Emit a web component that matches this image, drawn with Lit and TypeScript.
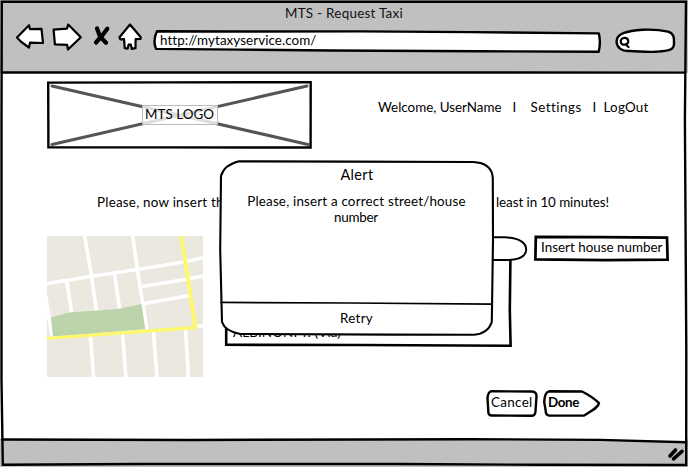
import { LitElement, html, css, svg } from "lit";
import { customElement, property } from "lit/decorators.js";

/* A single line of text, tracked so that it fills the given width. */
@customElement("sketch-label")
class SketchLabel extends LitElement {
  @property({ type: Number }) fit = 0;
  @property() text = "";

  static styles = css`
    :host { display: block; white-space: pre; line-height: 16px; }
    span { display: inline-block; }
  `;

  firstUpdated() {
    const span = this.renderRoot.querySelector("span") as HTMLElement;
    const natural = span.getBoundingClientRect().width;
    span.style.letterSpacing = (this.fit - natural) / this.text.length + "px";
    this.style.width = this.fit + "px";
  }

  render() {
    return html`<span>${this.text}</span>`;
  }
}

const label = (text: string, fit: number, cls = "") =>
  html`<sketch-label class=${cls} .text=${text} .fit=${fit}></sketch-label>`;

const art = (x: number, y: number, w: number, h: number, body: unknown) =>
  html`<svg class="art" width=${w} height=${h} viewBox="${x} ${y} ${w} ${h}">${body}</svg>`;

@customElement("app-root")
class AppRoot extends LitElement {
  static styles = css`
    :host {
      display: block; width: 688px; height: 467px; overflow: hidden;
      font: 13.4px/16px Lato, "Noto Sans", sans-serif; color: #000; background: #fff;
    }
    * { box-sizing: border-box; }
    svg { display: block; fill: none; stroke: #000; stroke-width: 2.4; stroke-linejoin: round; stroke-linecap: round; }
    .window { position: relative; display: grid; grid-template-rows: 73px 366px 28px; height: 467px; }
    .frame { position: absolute; inset: 0; pointer-events: none; }
    .box { position: relative; }
    .box > .art { position: absolute; left: 0; top: 0; }
    .box > sketch-label { position: relative; }
    header { background: #c0c0c0; padding: 5px 13px 0 15px; }
    .title { margin-left: 270px; color: #111; }
    .toolbar { display: flex; align-items: flex-start; margin-top: 1px; }
    .nav-icons { display: flex; }
    .address { width: 450px; height: 30px; margin-left: 8px; padding: 10px 0 0 8px; }
    .search { margin-left: 11px; }
    main { padding-left: 46px; }
    .top { display: flex; height: 121px; padding-top: 7px; }
    .logo { width: 266px; height: 68px; padding: 25px 0 0 96px; }
    .tag { position: relative; width: 76px; height: 20px; border: 1px solid #bbb; border-radius: 1px; background: rgba(255,255,255,.8); padding: 0 0 0 2px; }
    nav { display: flex; padding: 19px 0 0 66px; }
    .sep1 { margin-left: 11px; } .sep2 { margin-left: 11px; }
    .settings { margin-left: 14px; } .logout { margin-left: 6px; }
    .message { display: flex; gap: 265px; padding-left: 51px; height: 41px; }
    .body { display: flex; height: 155px; }
    .map { margin: 1px 0 0 1px; }
    .picker { width: 306px; height: 116px; margin-left: 20px; padding: 89px 0 0 10px; }
    .house { width: 138px; height: 30px; margin-left: 3px; padding: 4px 0 0 9px; }
    .actions { display: flex; padding-left: 439px; }
    .cancel { width: 54px; height: 30px; padding: 4px 0 0 6px; }
    .done { width: 60px; height: 30px; margin-left: 3px; padding: 4px 0 0 6px; font-weight: 700; }
    footer { background: #c0c0c0; display: flex; justify-content: flex-end; padding: 8px 4px 0 0; }
    .dialog { position: absolute; left: 218px; top: 159px; width: 276px; height: 178px; display: flex; flex-direction: column; align-items: center; padding-top: 8px; }
    .dialog > .art { position: absolute; left: 0; top: 0; }
    .dialog > sketch-label { position: relative; }
    .heading { font-size: 14.5px; margin-left: 2px; }
    .line1 { margin: 10px 0 0 1px; }
    .retry { margin-top: 85px; margin-left: 1px; }
  `;

  render() {
    return html`
      <div class="window">
        <header>
          ${label("MTS - Request Taxi", 118, "title")}
          <div class="toolbar">
            <div class="nav-icons">
              ${art(15, 22, 129, 30, svg`
                <g fill="#fff" stroke-width="2.2">
                  <path d="M17 37.500L29 25.200l1 4 11.500-.3L43 43l-13-.4-1 5L20.800 41.500Z"/>
                  <path d="M53.600 29.700L67 28.600l1.200-4L80.800 37.300 68 49.500l-.9-4.700-12.200-.5Z"/>
                  <path d="M130 24.500l-10.500 12.700.8 2.200 3.700-.2.8 9 2.800.5 1-4 2.300-.1.8 4.200 3.800-.6.1-9 4.800-.2.4-1.800Z"/>
                </g>
                <path stroke-width="4.200" d="M97 28.500l3 8 6 6.300M107.300 28.800L103 34.500 96 42.500"/>`)}
            </div>
            <div class="box address">
              ${art(152, 22, 450, 34, svg`<path fill="#fff" d="M157 31.200L240 31.500 360 31.400 470 32.100 598.800 33.400Q601 42 598.700 51.800L480 51.200 330 50.500 240 49.600 156 48.900Q152.500 40 157 31.200Z"/>`)}
              ${label("http://mytaxyservice.com/", 156)}
            </div>
            <div class="search">
              ${art(613, 22, 64, 34, svg`
                <path fill="#fff" d="M616.500 41.500C617 33 627 31 643 29.700c10-.4 18 .3 25 2 7 2 6 8 6 12 0 7-7 7.200-18 8-11 .8-18-.8-27-.7-8 0-12-4-12.500-9.500Z"/>
                <path stroke-width="2.200" d="M625 44.600c-5 1-6-6-1-6.600 5-.5 6 6 1 6.600l1 .1 2.500 2.300"/>`)}
            </div>
          </div>
        </header>
        <main>
          <div class="top">
            <div class="box logo">
              ${art(46, 80, 267, 69, svg`
                <path stroke="#555" stroke-width="3" d="M52 86l256 58.500M307 86L52 144.500"/>
                <path stroke-linejoin="miter" d="M48.200 82.600L165 82.400 310.700 82.200 310.600 147.500 160 147.400 48.400 147.200Z"/>`)}
              <div class="tag">${label("MTS LOGO", 69)}</div>
            </div>
            <nav>
              ${label("Welcome, UserName", 123.500)}
              ${label("I", 4, "sep1")}
              ${label("Settings", 51, "settings")}
              ${label("I", 5, "sep2")}
              ${label("LogOut", 45, "logout")}
            </nav>
          </div>
          <div class="message">
            ${label("Please, now insert the", 134)}
            ${label("least in 10 minutes!", 113)}
          </div>
          <div class="body">
            <div class="map">
              ${art(47, 236, 156, 141, svg`
                <path stroke="none" fill="#ebe8e0" d="M47 236h156v141H47Z"/>
                <g stroke="#fff" stroke-width="3.600" stroke-linecap="butt">
                  <path d="M47 283.500C80 278 120 272 150 267.500S185 262 204 257.500M84.500 235l6 35 6.300 43M132.500 235l6.500 45 8 50M66.700 281l5 32M114.500 274l5.300 36M142 286.500l34-5.500 28-5M144 303.500l46-8M45 292l7 45M195 327l9-1.500M90.500 336l3 42M122.500 334l3.500 44M153.500 332l3.500 46M185.500 329l3 49"/>
                </g>
                <path stroke="none" fill="#bcd4ac" d="M51 317.500l18-5 49-3.500 23.500-5 3.800 25L53 337Z"/>
                <path stroke="#fff86f" stroke-width="3.300" stroke-linecap="butt" d="M47 338.300L196.300 327.500"/>
                <path stroke="#fff86f" stroke-width="4" stroke-linecap="butt" d="M181 236l5.500 32 9 60.500"/>`)}
            </div>
            <div class="box picker">
              ${art(223, 235, 307, 116, svg`
                <path stroke-width="2.600" stroke-linejoin="miter" d="M226.200 260V344.800L360 345 510.600 345.800 509.800 310 510.400 260"/>
                <path stroke-width="2" fill="#fff" d="M240 237.200H505C519 238 526 242 526.200 249.500 526 256.500 520 259.500 509 260H240"/>`)}
              ${label("ALBINONI T. (Via)", 108)}
            </div>
            <div class="box house">
              ${art(532, 235, 138, 30, svg`<path stroke-width="2.700" stroke-linejoin="miter" d="M535.800 236.900L600 237.200 667 237.600 667.600 259.600 605 260.200 535.400 259.400Z"/>`)}
              ${label("Insert house number", 121.500)}
            </div>
          </div>
          <div class="actions">
            <div class="box cancel">
              ${art(485, 390, 54, 30, svg`<path d="M491 391.300L532 391.500Q536.500 392 536.500 396L535.500 411Q535.500 415.500 532 415.800L492 415.500Q488 415.500 488.300 411L487.500 398Q488 392 491 391.300Z"/>`)}
              ${label("Cancel", 41.500)}
            </div>
            <div class="box done">
              ${art(542, 390, 60, 30, svg`<path d="M549 391.300L582 391.500C589 395 594 398 599 403.200 598.500 407.500 591 411 584 415.600L549 415.600Q545.500 415 545.600 410L544.200 402Q544.500 392.500 549 391.300Z"/>`)}
              ${label("Done", 31)}
            </div>
          </div>
        </main>
        <footer>
          ${art(664, 447, 20, 16, svg`<path stroke-width="3.600" d="M668 456l5.500-6M671.500 458.800l8.500-7.500"/>`)}
        </footer>

        <svg class="frame" width="688" height="467" viewBox="0 0 688 467">
          <path stroke="none" fill="#fff" d="M570 438h116v4.500Z"/>
          <path stroke-linejoin="miter" d="M1.800 1.800H686L684.900 120 686.300 350 686.200 465L540 464.800 400 464 140 464 2.800 464.800 1.500 380 1.500 120Z"/>
          <path d="M2 72.500L685 72.600M2 439.500L190 440 470 439.200 600 439.900 686 442.200"/>
        </svg>

        <section class="dialog">
          ${art(218, 159, 276, 178, svg`
            <path stroke-width="2.100" fill="#fff" d="M239 161.300L350 161.600 473 162C485 162.500 492.200 168 492.800 178L493 240 491.800 322Q488 333.500 474 334.800L390 334.600 240 334Q225 331 222 322L220.200 250 221 176Q224 165 239 161.300Z"/>
            <path stroke-width="1.700" d="M221 302.400L350 303 492 304.200"/>`)}
          ${label("Alert", 33, "heading")}
          ${label("Please, insert a correct street/house", 218.500, "line1")}
          ${label("number", 44)}
          ${label("Retry", 33, "retry")}
        </section>
      </div>
    `;
  }
}
